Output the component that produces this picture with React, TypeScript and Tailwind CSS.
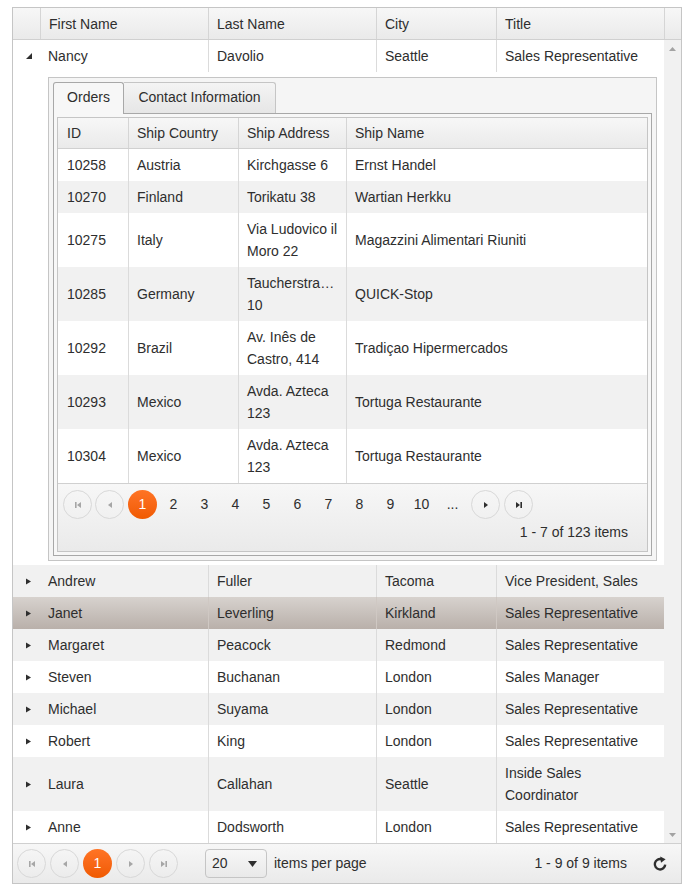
import React from "react";

const F = "font-['Liberation_Sans',Arial,Helvetica,sans-serif]";

function ExpandIcon() {
  return (
    <svg width="5" height="7" viewBox="0 0 5 7">
      <path d="M0 0.5L5 3.5L0 6.5Z" fill="#2e2e2e" />
    </svg>
  );
}

function CollapseIcon() {
  return (
    <svg width="6" height="6" viewBox="0 0 6 6">
      <path d="M6 0L6 6L0 6Z" fill="#2e2e2e" />
    </svg>
  );
}

type NavKind = "first" | "prev" | "next" | "last";

function NavIcon({ kind, color }: { kind: NavKind; color: string }) {
  const d =
    kind === "first"
      ? "M1 1h1.6v6H1z M7 1v6L3 4z"
      : kind === "prev"
      ? "M6 1v6L2 4z"
      : kind === "next"
      ? "M2 1v6l4-3z"
      : "M1 1v6l4-3z M5.4 1H7v6H5.4z";
  return (
    <svg width="8" height="8" viewBox="0 0 8 8">
      <path d={d} fill={color} />
    </svg>
  );
}

function NavBtn({ kind, enabled, className = "" }: { kind: NavKind; enabled: boolean; className?: string }) {
  return (
    <div
      className={`w-[29px] h-[29px] rounded-full border border-[#d8d8d8] flex items-center justify-center shrink-0 ${className}`}
    >
      <NavIcon kind={kind} color={enabled ? "#2e2e2e" : "#a6a6a6"} />
    </div>
  );
}

function ActivePage({ className = "" }: { className?: string }) {
  return (
    <div
      className={`w-[29px] h-[29px] rounded-full bg-gradient-to-b from-[#ff7424] to-[#f05a00] text-white flex items-center justify-center shrink-0 ${className}`}
    >
      1
    </div>
  );
}

type MasterRow = {
  first: string;
  last: string;
  city: string;
  title: string[];
  kind: "white" | "alt" | "sel";
  expanded?: boolean;
};

const masters: MasterRow[] = [
  { first: "Andrew", last: "Fuller", city: "Tacoma", title: ["Vice President, Sales"], kind: "alt" },
  { first: "Janet", last: "Leverling", city: "Kirkland", title: ["Sales Representative"], kind: "sel" },
  { first: "Margaret", last: "Peacock", city: "Redmond", title: ["Sales Representative"], kind: "alt" },
  { first: "Steven", last: "Buchanan", city: "London", title: ["Sales Manager"], kind: "white" },
  { first: "Michael", last: "Suyama", city: "London", title: ["Sales Representative"], kind: "alt" },
  { first: "Robert", last: "King", city: "London", title: ["Sales Representative"], kind: "white" },
  { first: "Laura", last: "Callahan", city: "Seattle", title: ["Inside Sales", "Coordinator"], kind: "alt" },
  { first: "Anne", last: "Dodsworth", city: "London", title: ["Sales Representative"], kind: "white" },
];

const rowBg = (k: "white" | "alt" | "sel") =>
  k === "white"
    ? "bg-white"
    : k === "alt"
    ? "bg-[#f1f1f1]"
    : "bg-gradient-to-b from-[#d7d2ce] to-[#b9b0aa]";

function Lines({ lines }: { lines: string[] }) {
  return (
    <span className="whitespace-nowrap">
      {lines.map((l, i) => (
        <React.Fragment key={i}>
          {i > 0 && <br />}
          {l}
        </React.Fragment>
      ))}
    </span>
  );
}

function MasterRowView({ r }: { r: MasterRow }) {
  const cell = "flex items-center py-[5px] leading-[22px] pl-[8px]";
  const bl = r.kind === "sel" ? "border-l border-[#cfc8c3]" : "border-l border-[#dbdbdb]";
  return (
    <div className={`flex ${rowBg(r.kind)}`}>
      <div className="w-[27px] flex items-center pl-[13px] shrink-0">
        {r.expanded ? <CollapseIcon /> : <ExpandIcon />}
      </div>
      <div className={`w-[168px] shrink-0 ${cell}`}>{r.first}</div>
      <div className={`w-[168px] shrink-0 ${bl} ${cell}`}>{r.last}</div>
      <div className={`w-[120px] shrink-0 ${bl} ${cell}`}>{r.city}</div>
      <div className={`w-[168px] shrink-0 ${bl} ${cell}`}>
        <Lines lines={r.title} />
      </div>
    </div>
  );
}

type Order = { id: string; country: string; addr: string[]; name: string; alt: boolean };

const orders: Order[] = [
  { id: "10258", country: "Austria", addr: ["Kirchgasse 6"], name: "Ernst Handel", alt: false },
  { id: "10270", country: "Finland", addr: ["Torikatu 38"], name: "Wartian Herkku", alt: true },
  { id: "10275", country: "Italy", addr: ["Via Ludovico il", "Moro 22"], name: "Magazzini Alimentari Riuniti", alt: false },
  { id: "10285", country: "Germany", addr: ["Taucherstra\u2026", "10"], name: "QUICK-Stop", alt: true },
  { id: "10292", country: "Brazil", addr: ["Av. Inês de", "Castro, 414"], name: "Tradiçao Hipermercados", alt: false },
  { id: "10293", country: "Mexico", addr: ["Avda. Azteca", "123"], name: "Tortuga Restaurante", alt: true },
  { id: "10304", country: "Mexico", addr: ["Avda. Azteca", "123"], name: "Tortuga Restaurante", alt: false },
];

const headerBg = "bg-gradient-to-b from-[#f7f7f7] to-[#eaeaea]";

function DetailGrid() {
  const cell = "flex items-center py-[5px] leading-[22px]";
  return (
    <div className="border border-[#c5c5c5] bg-white">
      <div className={`flex h-[31px] border-b border-[#d0d0d0] ${headerBg}`}>
        <div className="w-[70px] pl-[9px] pt-[1px] flex items-center">ID</div>
        <div className="w-[110px] border-l border-[#d5d5d5] pl-[8px] pt-[1px] flex items-center">Ship Country</div>
        <div className="w-[108px] border-l border-[#d5d5d5] pl-[8px] pt-[1px] flex items-center">Ship Address</div>
        <div className="w-[301px] border-l border-[#d5d5d5] pl-[8px] pt-[1px] flex items-center">Ship Name</div>
      </div>
      {orders.map((o) => (
        <div key={o.id + o.name + o.alt} className={`flex ${o.alt ? "bg-[#f1f1f1]" : "bg-white"}`}>
          <div className={`w-[70px] pl-[9px] ${cell}`}>{o.id}</div>
          <div className={`w-[110px] border-l border-[#dbdbdb] pl-[8px] ${cell}`}>{o.country}</div>
          <div className={`w-[108px] border-l border-[#dbdbdb] pl-[8px] ${cell}`}>
            <Lines lines={o.addr} />
          </div>
          <div className={`w-[301px] border-l border-[#dbdbdb] pl-[8px] ${cell}`}>{o.name}</div>
        </div>
      ))}
      <div className={`h-[68px] border-t border-[#d0d0d0] ${headerBg} pt-[6px] pl-[5px] pr-[18px]`}>
        <div className="flex items-center h-[29px]">
          <NavBtn kind="first" enabled={false} className="mr-[3px]" />
          <NavBtn kind="prev" enabled={false} className="mr-[4px]" />
          <ActivePage className="mr-[2px]" />
          {["2", "3", "4", "5", "6", "7", "8", "9", "10"].map((n) => (
            <div key={n} className="w-[29px] h-[29px] mr-[2px] flex items-center justify-center shrink-0">
              {n}
            </div>
          ))}
          <div className="w-[29px] h-[29px] mr-[4px] flex items-center justify-center shrink-0">...</div>
          <NavBtn kind="next" enabled={true} className="mr-[4px]" />
          <NavBtn kind="last" enabled={true} />
        </div>
        <div className="flex justify-end leading-[20px] mt-[3px] pr-[1px]">1 - 7 of 123 items</div>
      </div>
    </div>
  );
}

function TabStrip() {
  return (
    <div className="w-[609px] border border-[#c5c5c5] bg-[#f5f5f5] p-[4px]">
      <div className="flex h-[31px] items-start">
        <div className="relative z-10 w-[71px] h-[32px] border-l border-t border-r border-[#a8a8a8] rounded-t-[3px] bg-[#f7f7f7] flex items-center justify-center pb-[2px]">
          Orders
        </div>
        <div className="w-[152px] h-[31px] border-t border-r border-[#c5c5c5] rounded-tr-[3px] bg-gradient-to-b from-[#f4f4f4] to-[#e6e6e6] flex items-center justify-center pb-[1px]">
          Contact Information
        </div>
      </div>
      <div className="border border-[#a8a8a8] bg-[#f7f7f7] p-[3px]">
        <DetailGrid />
      </div>
    </div>
  );
}

function RefreshIcon() {
  return (
    <svg width="16" height="16" viewBox="0 0 16 16">
      <path
        d="M13.2 8.6A5.2 5.2 0 1 1 9.6 3.3"
        stroke="#2e2e2e"
        strokeWidth="2.4"
        fill="none"
      />
      <path d="M8.2 0.4L13.6 3.2L9 6.8Z" fill="#2e2e2e" />
    </svg>
  );
}

export default function App() {
  const nancy: MasterRow = {
    first: "Nancy",
    last: "Davolio",
    city: "Seattle",
    title: ["Sales Representative"],
    kind: "white",
    expanded: true,
  };
  return (
    <div className={`${F} w-[690px] h-[893px] bg-white pt-[7px] pl-[12px] text-[14px] text-[#2e2e2e]`}>
      <div className="w-[670px] border border-[#c5c5c5]">
        {/* header */}
        <div className={`flex h-[32px] border-b border-[#d0d0d0] ${headerBg}`}>
          <div className="w-[27px] shrink-0" />
          <div className="w-[168px] border-l border-[#d5d5d5] pl-[8px] pt-[2px] flex items-center">First Name</div>
          <div className="w-[168px] border-l border-[#d5d5d5] pl-[8px] pt-[2px] flex items-center">Last Name</div>
          <div className="w-[120px] border-l border-[#d5d5d5] pl-[8px] pt-[2px] flex items-center">City</div>
          <div className="w-[168px] border-l border-[#d5d5d5] pl-[8px] pt-[2px] flex items-center">Title</div>
          <div className="w-[17px] border-l border-[#d5d5d5]" />
        </div>
        {/* body */}
        <div className="flex">
          <div className="w-[651px]">
            <MasterRowView r={nancy} />
            <div className="flex bg-white">
              <div className="w-[27px] shrink-0" />
              <div className="w-[624px] pl-[8px] pt-[5px] pb-[4px]">
                <TabStrip />
              </div>
            </div>
            {masters.map((r) => (
              <MasterRowView key={r.first} r={r} />
            ))}
          </div>
          <div className="w-[17px] bg-[#f1f1f1] flex flex-col justify-between items-center">
            <div className="h-[17px] flex items-center justify-center">
              <svg width="7" height="4" viewBox="0 0 7 4">
                <path d="M0 4L3.5 0L7 4Z" fill="#a3a3a3" />
              </svg>
            </div>
            <div className="h-[17px] flex items-center justify-center">
              <svg width="7" height="4" viewBox="0 0 7 4">
                <path d="M0 0L3.5 4L7 0Z" fill="#a3a3a3" />
              </svg>
            </div>
          </div>
        </div>
        {/* pager */}
        <div className={`h-[40px] border-t border-[#d0d0d0] ${headerBg} flex items-center pl-[4px] pr-[13px]`}>
          <NavBtn kind="first" enabled={false} className="mr-[4px]" />
          <NavBtn kind="prev" enabled={false} className="mr-[4px]" />
          <ActivePage className="mr-[4px]" />
          <NavBtn kind="next" enabled={false} className="mr-[4px]" />
          <NavBtn kind="last" enabled={false} />
          <div className="ml-[27px] w-[62px] h-[29px] border border-[#c5c5c5] rounded-[4px] bg-gradient-to-b from-[#f7f7f7] to-[#e9e9e9] flex items-center pl-[6px] pr-[9px] justify-between">
            <span>20</span>
            <svg width="9" height="6" viewBox="0 0 9 6">
              <path d="M0 0H9L4.5 6Z" fill="#2e2e2e" />
            </svg>
          </div>
          <span className="ml-[7px]">items per page</span>
          <div className="flex-1" />
          <span>1 - 9 of 9 items</span>
          <div className="ml-[25px]">
            <RefreshIcon />
          </div>
        </div>
      </div>
    </div>
  );
}
